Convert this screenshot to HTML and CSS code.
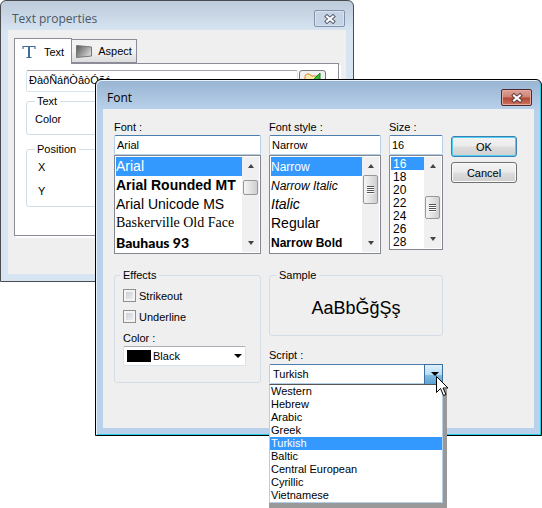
FILE: index.html
```html
<!DOCTYPE html>
<html lang="en">
<head>
<meta charset="utf-8">
<title>Font</title>
<link rel="stylesheet" href="styles.css">
</head>
<body>
<main class="desktop">
  <section class="window window-back">
    <header class="titlebar">
      <h1>Text properties</h1>
      <button class="close" aria-label="Close">
        <svg width="12" height="10" viewBox="0 0 12 10"><path d="M3 2.5 9 7.5M9 2.5 3 7.5" stroke="#555a6e" stroke-width="4" stroke-linecap="square"/><path d="M3 2.5 9 7.5M9 2.5 3 7.5" stroke="#fff" stroke-width="2" stroke-linecap="square"/></svg>
      </button>
    </header>
    <div class="client properties">
      <div class="tabs">
        <button class="tab tab-active">
          <svg width="14" height="14" viewBox="0 0 14 14"><path d="M1 4V1.5H13V4M4.5 12.5H9.5" fill="none" stroke="#416b98" stroke-width="1.2"/><path d="M7 2V12.5" stroke="#416b98" stroke-width="2"/></svg>
          Text
        </button>
        <button class="tab">
          <svg width="16" height="13" viewBox="0 0 16 13"><defs><linearGradient id="plate" x2="1" y2="0.6"><stop stop-color="#555"/><stop offset="1" stop-color="#d4d4d4"/></linearGradient></defs><path d="M.5 .5 15.5 2V11L.5 12.5Z" fill="url(#plate)" stroke="#777"/></svg>
          Aspect
        </button>
      </div>
      <div class="panel">
        <div class="text-row">
          <input class="sample-input" type="text" aria-label="Text value" value="ÐàðÑáñÒâòÓãó">
          <button class="font-button" aria-label="Choose font">
            <svg width="18" height="16" viewBox="0 0 18 16"><path d="M1 13V4Q2 1 5 2L8 4H14V13Z" fill="#fbe9a7" stroke="#d0873a"/><path d="M10 7 16 1V14H12L10 10Z" fill="#38b838" stroke="#168a24"/></svg>
          </button>
        </div>
        <fieldset class="group group-text">
          <legend>Text</legend>
          <p>Color</p>
        </fieldset>
        <fieldset class="group group-position">
          <legend>Position</legend>
          <p>X</p>
          <p>Y</p>
        </fieldset>
      </div>
    </div>
  </section>

  <section class="window window-front">
    <header class="titlebar">
      <h2>Font</h2>
      <button class="close close-red" aria-label="Close">
        <svg width="12" height="10" viewBox="0 0 12 10"><path d="M3 2.5 9 7.5M9 2.5 3 7.5" stroke="#5d3a3a" stroke-width="4" stroke-linecap="square"/><path d="M3 2.5 9 7.5M9 2.5 3 7.5" stroke="#fff" stroke-width="2" stroke-linecap="square"/></svg>
      </button>
    </header>
    <form class="client chooser">
      <div class="picker">
        <label for="font">Font :</label>
        <input id="font" type="text" value="Arial">
        <div class="list">
          <select class="items" size="5" aria-label="Fonts">
            <option selected>Arial</option>
            <option class="bold">Arial Rounded MT</option>
            <option>Arial Unicode MS</option>
            <option class="serif">Baskerville Old Face</option>
            <option class="heavy">Bauhaus 93</option>
          </select>
          <div class="scroll">
            <i class="arrow up"></i><i class="thumb"></i><i class="arrow down"></i>
          </div>
        </div>
      </div>

      <div class="picker">
        <label for="style">Font style :</label>
        <input id="style" type="text" value="Narrow">
        <div class="list">
          <select class="items" size="5" aria-label="Font styles">
            <option class="narrow" selected>Narrow</option>
            <option class="narrow italic">Narrow Italic</option>
            <option class="italic">Italic</option>
            <option>Regular</option>
            <option class="narrow bold">Narrow Bold</option>
          </select>
          <div class="scroll">
            <i class="arrow up"></i><i class="thumb thumb-tall"></i><i class="arrow down"></i>
          </div>
        </div>
      </div>

      <div class="picker">
        <label for="size">Size :</label>
        <input id="size" type="text" value="16">
        <div class="list list-short">
          <select class="items sizes" size="7" aria-label="Sizes">
            <option selected>16</option>
            <option>18</option>
            <option>20</option>
            <option>22</option>
            <option>24</option>
            <option>26</option>
            <option>28</option>
          </select>
          <div class="scroll">
            <i class="arrow up"></i><i class="thumb thumb-mid"></i><i class="arrow down"></i>
          </div>
        </div>
      </div>

      <div class="actions">
        <button type="button" class="push push-default">OK</button>
        <button type="button" class="push">Cancel</button>
      </div>

      <fieldset class="group effects">
        <legend>Effects</legend>
        <label class="check"><input type="checkbox"> Strikeout</label>
        <label class="check"><input type="checkbox"> Underline</label>
        <label class="color-label" for="color">Color :</label>
        <div class="drop-box">
          <select id="color" class="drop color"><option>Black</option></select>
        </div>
      </fieldset>

      <div class="preview">
        <fieldset class="group sample">
          <legend>Sample</legend>
          <p>AaBbĞğŞş</p>
        </fieldset>
        <label for="script">Script :</label>
        <div class="drop-box drop-open">
          <select id="script" class="drop script"><option>Turkish</option></select>
          <ul class="menu">
            <li>Western</li>
            <li>Hebrew</li>
            <li>Arabic</li>
            <li>Greek</li>
            <li class="chosen">Turkish</li>
            <li>Baltic</li>
            <li>Central European</li>
            <li>Cyrillic</li>
            <li>Vietnamese</li>
          </ul>
          <svg class="pointer" width="13" height="21" viewBox="0 0 13 21"><path d="M.5 .5V16.5L4.5 12.5 7.5 19.5 10 18.5 7 12H12Z" fill="#fff" stroke="#000"/></svg>
        </div>
      </div>
    </form>
  </section>
</main>
</body>
</html>
```
FILE: styles.css
```css
* { box-sizing: border-box; }

body {
  margin: 0;
  background: #fff;
  color: #000;
  font: 11px/14px "Liberation Sans", Arial, sans-serif;
}

h1, h2, p, ul { margin: 0; padding: 0; }
button, input, select { font: inherit; color: inherit; margin: 0; }

.desktop { position: relative; min-height: 100vh; overflow: hidden; }

/* Window frames */
.window {
  position: absolute;
  display: flex;
  flex-direction: column;
  border-radius: 6px 6px 0 0;
}
.window-back {
  top: 0;
  left: 0;
  right: 188px;
  padding: 0 7px 7px;
  border: 1px solid #4a4c50;
  background: linear-gradient(#bccad9, #d7e4f2 30px);
}
.window-front {
  top: 79px;
  left: 95px;
  right: 0;
  padding: 0 7px 7px;
  border: 1px solid #000;
  background: linear-gradient(#98b4d2, #b9d1ea 30px);
  box-shadow: inset 1px 1px #e8f2fc, inset -1px -1px #27cfe6;
}

.titlebar {
  display: flex;
  align-items: center;
  justify-content: space-between;
  height: 29px;
  padding: 6px 1px 0 4px;
}
.window-front .titlebar { padding-right: 2px; }
.titlebar h1, .titlebar h2 {
  font: 12px/16px "Open Sans", "Noto Sans", sans-serif;
}
.titlebar h1 { color: #4b5868; }

.close {
  display: flex;
  align-items: center;
  justify-content: center;
  width: 31px;
  height: 17px;
  padding: 0;
  border: 1px solid #8391ad;
  border-radius: 2px;
  background: #c5d4e4;
  box-shadow: inset 0 0 0 1px #d6e3f0;
}
.close-red {
  border-color: #50272c;
  background: linear-gradient(#dda298, #cf8274 48%, #b34634 52%, #cc755f);
  box-shadow: inset 0 0 0 1px #e3aaa0;
}

.client { background: #efefef; }

/* Text properties */
.properties { padding: 7px 7px 38px 6px; }
.tabs { display: flex; align-items: flex-end; height: 26px; }
.tab {
  display: flex;
  align-items: center;
  gap: 6px;
  height: 24px;
  padding: 0 4px;
  border: 1px solid #8b8c98;
  border-left: 0;
  background: linear-gradient(#f2f2f2 50%, #dcdcdc);
}
.tab-active {
  position: relative;
  gap: 8px;
  height: 26px;
  margin-bottom: -1px;
  padding: 0 7px;
  border-left: 1px solid #8b8c98;
  border-bottom: 0;
  background: #fff;
}
.panel {
  padding: 6px 12px 28px 11px;
  border: 1px solid #8b8c98;
  box-shadow: 2px 2px #fff;
  background: #fff;
}
.text-row { display: flex; gap: 1px; height: 22px; margin-bottom: 2px; }
.sample-input {
  flex: 1;
  min-width: 0;
  padding: 0 2px 2px;
  border: 1px solid #dbe4ec;
  border-top-color: #a4a6ae;
  border-radius: 2px;
}
.font-button {
  width: 27px;
  padding: 1px;
  border: 1px solid #777;
  border-radius: 3px;
  background: #f0f0f0;
}

.group {
  min-width: 0;
  margin: 0;
  border: 1px solid #d3dde7;
  border-radius: 3px;
}
.group legend { padding: 0 3px; }
.group-text { height: 41px; padding: 4px 8px; }
.group-text legend, .group-position legend { padding-left: 2px; }
.group-position { height: 65px; margin-top: 7px; padding: 4px 11px; }
.group-position legend { margin-left: -3px; }
.group-position p + p { margin-top: 10px; }

/* Font chooser */
.chooser {
  display: grid;
  grid-template-columns: 147fr 112fr 54fr 66px;
  gap: 14px 8px;
  align-items: start;
  padding: 11px 17px 44px 11px;
}
.picker { display: flex; flex-direction: column; min-width: 0; }
.picker label { margin-bottom: 1px; }
.picker input {
  width: 100%;
  height: 20px;
  padding: 0 2px;
  border: 1px solid #b5cfe7;
  border-top-color: #4c7daf;
  border-radius: 2px;
  background: #fff;
}
.list {
  display: flex;
  height: 99px;
  padding: 1px;
  border: 1px solid #828790;
  background: #fff;
}
.list-short { height: 95px; }
.items {
  flex: 1;
  min-width: 0;
  height: 100%;
  padding: 0;
  border: 0;
  outline: 0;
  border-radius: 0;
  overflow: hidden;
  scrollbar-width: none;
  background: #fff;
  font-size: 14px;
}
.items option {
  height: 19px;
  min-height: 0;
  padding: 1px 0 0;
  color: #000;
}
.items option:checked {
  color: #fff;
  background: linear-gradient(#39f, #39f);
}
.items.sizes { font-size: 12px; }
.items.sizes option { height: 13px; padding: 0 2px; }
.items .narrow { padding-top: 3px; font-size: 12px; }
.italic { font-style: italic; }
.bold { font-weight: bold; }
.serif { font-family: "Liberation Serif", serif; }
.heavy { font-family: Lato, sans-serif; font-weight: 900; }

.scroll {
  display: flex;
  flex-direction: column;
  align-items: center;
  width: 17px;
  background: #f0f0f0;
}
.arrow {
  margin: 7px 0;
  border: 3px solid transparent;
}
.arrow.up { border-top: 0; border-bottom: 4px solid #444; }
.arrow.down { margin-top: auto; border-bottom: 0; border-top: 4px solid #444; }
.thumb {
  width: 15px;
  height: 15px;
  margin-top: 5px;
  border: 1px solid #979797;
  border-radius: 2px;
  background: linear-gradient(90deg, #f5f5f5, #e2e2e2 50%, #cfcfcf);
}
.thumb-tall, .thumb-mid {
  height: 29px;
  margin-top: 0;
  background:
    repeating-linear-gradient(#555 0 1px, #fff 1px 2px) center / 7px 8px no-repeat,
    linear-gradient(90deg, #f5f5f5, #e2e2e2 50%, #cfcfcf);
}
.thumb-mid { height: 23px; margin-top: 21px; }

.actions { display: flex; flex-direction: column; gap: 5px; padding-top: 16px; }
.push {
  height: 21px;
  padding: 0;
  border: 1px solid #707070;
  border-radius: 3px;
  background: linear-gradient(#f3f3f3, #ebebeb 48%, #ddd 52%, #cfcfcf);
  box-shadow: inset 0 0 0 1px #fafafa;
}
.push-default { border-color: #3c7fb1; box-shadow: inset 0 0 0 1px #4fd0f5; }

.effects { height: 115px; padding: 7px 14px 0 8px; }
.effects legend { margin-left: -3px; }
.check { display: flex; align-items: center; gap: 3px; height: 13px; margin-bottom: 8px; }
.check input {
  appearance: none;
  width: 13px;
  height: 13px;
  border: 1px solid #8e8f8f;
  background: linear-gradient(135deg, #c4c8d0, #f4f4f4);
  box-shadow: inset 0 0 0 2px #f4f4f4;
}
.color-label { display: block; margin-bottom: 1px; }

.drop-box { position: relative; }
.drop-box::after {
  content: "";
  position: absolute;
  z-index: 1;
  top: 8px;
  right: 4px;
  border: 4px solid transparent;
  border-top-color: #000;
  border-bottom: 0;
}
.drop {
  appearance: none;
  display: block;
  width: 100%;
  height: 20px;
  border: 1px solid #d9e3ee;
  border-top-color: #a9adb6;
  border-radius: 2px;
}
.color {
  padding: 0 20px 0 29px;
  background: linear-gradient(#000, #000) 3px 3px / 24px 12px no-repeat, #fff;
}
.script {
  padding: 0 20px 0 3px;
  border-color: #4c7daf #b5cfe7 #b5cfe7;
  background: #fff;
}
.drop-open::before {
  content: "";
  position: absolute;
  top: 0;
  right: 0;
  width: 17px;
  height: 20px;
  border: 1px solid #3c6f9c;
  background: linear-gradient(#dff1fb, #b5dcf2 48%, #7fbce0 52%, #5a9fd0);
}

.preview { grid-column: 2 / 4; }
.sample { height: 68px; margin-bottom: 12px; padding: 0; }
.sample legend { margin-left: 6px; }
.sample p { padding-top: 14px; text-align: center; font-size: 18px; line-height: 24px; }
.preview > label { display: block; margin-bottom: 2px; }
.menu {
  position: absolute;
  z-index: 2;
  top: 100%;
  left: 0;
  right: 0;
  list-style: none;
  border: 1px solid #b5cfe7;
  border-top-color: #555;
  background: #fff;
  box-shadow: 0 5px #999, 4px 5px #999;
  line-height: 13px;
}
.menu li { padding: 0 1px; }
.menu .chosen { background: #39f; color: #fff; }
.pointer { position: absolute; z-index: 3; top: 12px; right: -6px; }
```
